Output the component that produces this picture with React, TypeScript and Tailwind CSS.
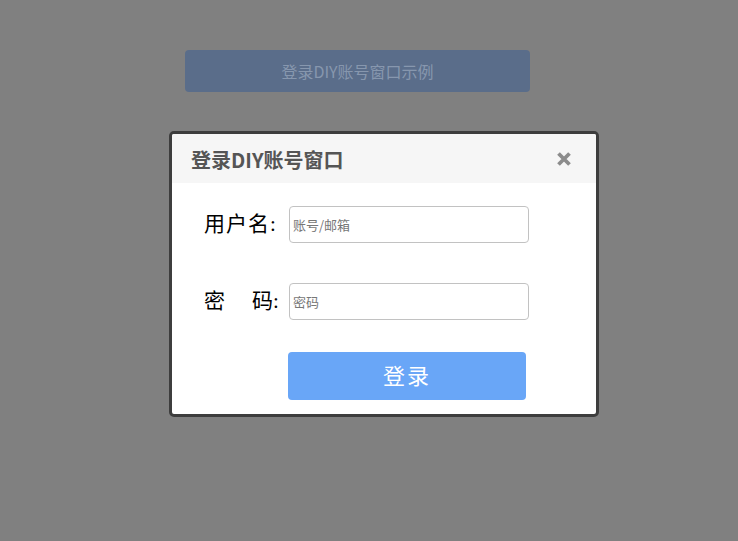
import React from "react";

const sans = { fontFamily: '"Microsoft YaHei", "Noto Sans CJK SC", "Liberation Sans", sans-serif' };
const serif = { fontFamily: '"Liberation Serif", "Noto Sans CJK SC", serif' };

export default function App() {
  return (
    <div className="w-[738px] h-[541px] bg-[#808080] overflow-hidden flex flex-col" style={sans}>
      <div className="pt-[50px] pl-[185px]">
        <div className="w-[345px] h-[42px] rounded-[4px] bg-[#5a6d8a] flex items-center justify-center text-[16px] text-[#8797ae]">
          登录DIY账号窗口示例
        </div>
      </div>
      <div className="pt-[39px] pl-[169px]">
        <div className="w-[430px] h-[286px] border-[3px] border-[#3d3d3d] rounded-[5px] bg-white overflow-hidden flex flex-col">
          <div className="h-[49px] bg-[#f6f6f6] flex items-center justify-between pl-[19px] pr-[24px] shrink-0">
            <span className="text-[20px] font-bold text-[#555555] pt-[2px]">登录DIY账号窗口</span>
            <svg width="16" height="16" viewBox="0 0 16 16" className="mt-[1px]">
              <path d="M2.5 2.5 L13.5 13.5 M13.5 2.5 L2.5 13.5" stroke="#8c8c8c" strokeWidth="3.8" strokeLinecap="butt" />
            </svg>
          </div>
          <div className="flex flex-col pl-[32px]">
            <div className="flex items-center mt-[23px]">
              <label className="w-[85px] text-[21px] text-black tracking-[1px]" style={serif}>用户名:</label>
              <input
                placeholder="账号/邮箱"
                className="w-[240px] h-[37px] border border-[#c2c2c2] rounded-[4px] px-[3px] text-[13px] text-[#333] placeholder:text-[#777] outline-none"
                style={sans}
              />
            </div>
            <div className="flex items-center mt-[40px]">
              <label className="w-[85px] text-[21px] text-black flex" style={serif}>
                <span>密</span>
                <span className="ml-[27px]">码:</span>
              </label>
              <input
                placeholder="密码"
                className="w-[240px] h-[37px] border border-[#c2c2c2] rounded-[4px] px-[3px] text-[13px] text-[#333] placeholder:text-[#777] outline-none"
                style={sans}
              />
            </div>
            <div className="mt-[32px] pl-[84px]">
              <button
                className="w-[238px] h-[48px] rounded-[4px] bg-[#69a6f7] text-white text-[22px] tracking-[2px] flex items-center justify-center"
                style={serif}
              >
                登录
              </button>
            </div>
          </div>
        </div>
      </div>
    </div>
  );
}
